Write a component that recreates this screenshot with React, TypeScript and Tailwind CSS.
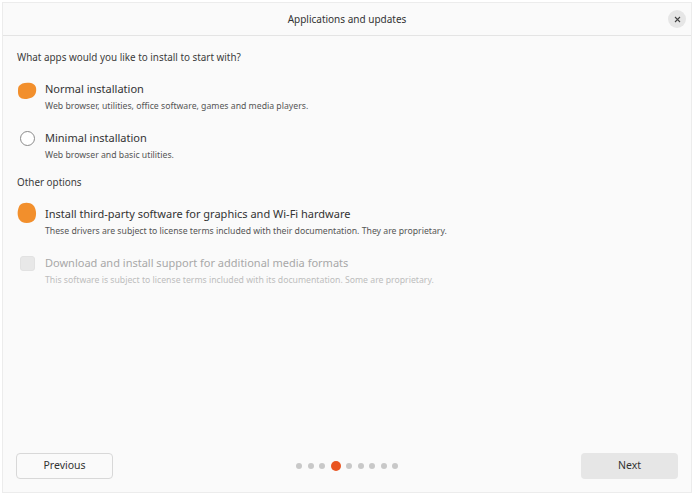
import React from "react";

function Blob({ tall }: { tall?: boolean }) {
  return tall ? (
    <svg width="20" height="22" viewBox="0 0 20 22" className="shrink-0">
      <path d="M3 3 C6 0 13 0 16 3 C19 6 20 12 18 17 C16 21 9 22 5 20 C1 18 0 12 1 8 C1.5 6 2 4 3 3 Z" fill="#f28f2c" />
    </svg>
  ) : (
    <svg width="20" height="18" viewBox="0 0 20 18" className="shrink-0">
      <path d="M2 4 C4 1 9 0 14 1 C18 2 20 5 19 10 C18 15 13 17 8 17 C3 17 1 14 1 10 C1 7 1 5 2 4 Z" fill="#f28f2c" />
    </svg>
  );
}

export default function App() {
  const font = { fontFamily: '"Noto Sans", "Open Sans", sans-serif' };
  return (
    <div className="w-[696px] h-[498px] bg-white p-[2px] pb-[5px] pr-[4px]" style={font}>
      <div className="w-full h-full bg-[#fafafa] border border-[#ececec] flex flex-col">
        <div className="h-[33px] border-b border-[#e4e4e4] relative flex items-center justify-center shrink-0">
          <span className="text-[10px] text-[#333]">Applications and updates</span>
          <div className="absolute right-[5px] top-[7px] w-[18px] h-[18px] rounded-full bg-[#e6e6e6] flex items-center justify-center">
            <svg width="7" height="7" viewBox="0 0 7 7">
              <path d="M1 1 L6 6 M6 1 L1 6" stroke="#444" strokeWidth="1.1" />
            </svg>
          </div>
        </div>
        <div className="flex-1 flex flex-col px-[14px] pt-[14px]">
          <div className="text-[9.9px] text-[#3a3a3a] leading-[14px]">What apps would you like to install to start with?</div>

          <div className="flex mt-[17px] items-start">
            <div className="w-[28px] pt-[1px]"><Blob /></div>
            <div className="flex flex-col">
              <div className="text-[11px] text-[#333] leading-[16px]">Normal installation</div>
              <div className="text-[8.7px] text-[#555] leading-[12px] mt-[3px]">Web browser, utilities, office software, games and media players.</div>
            </div>
          </div>

          <div className="flex mt-[18px] items-start">
            <div className="w-[28px] pt-[1px] pl-[3px]">
              <div className="w-[15px] h-[15px] rounded-full border border-[#8a8a8a] bg-white" />
            </div>
            <div className="flex flex-col">
              <div className="text-[11px] text-[#333] leading-[16px]">Minimal installation</div>
              <div className="text-[8.7px] text-[#555] leading-[12px] mt-[3px]">Web browser and basic utilities.</div>
            </div>
          </div>

          <div className="text-[9.9px] text-[#3a3a3a] leading-[14px] mt-[14px]">Other options</div>

          <div className="flex mt-[17px] items-start">
            <div className="w-[28px] -mt-[4px]"><Blob tall /></div>
            <div className="flex flex-col">
              <div className="text-[11px] text-[#333] leading-[16px]">Install third-party software for graphics and Wi-Fi hardware</div>
              <div className="text-[8.7px] text-[#555] leading-[12px] mt-[3px]">These drivers are subject to license terms included with their documentation. They are proprietary.</div>
            </div>
          </div>

          <div className="flex mt-[18px] items-start">
            <div className="w-[28px] pt-[1px] pl-[3px]">
              <div className="w-[15px] h-[15px] rounded-[3px] bg-[#e8e8e8] border border-[#e2e2e2]" />
            </div>
            <div className="flex flex-col">
              <div className="text-[11px] text-[#a8a8a8] leading-[16px]">Download and install support for additional media formats</div>
              <div className="text-[8.7px] text-[#bdbdbd] leading-[12px] mt-[3px]">This software is subject to license terms included with its documentation. Some are proprietary.</div>
            </div>
          </div>
        </div>
        <div className="flex items-center justify-between px-[13px] pb-[13px] shrink-0">
          <button className="w-[97px] h-[26px] rounded-[4px] border border-[#d8d8d8] bg-[#fafafa] text-[10.5px] text-[#333]">Previous</button>
          <div className="flex items-center gap-[5.5px] ml-[0px]">
            {[0, 1, 2, 3, 4, 5, 6, 7, 8].map((i) =>
              i === 3 ? (
                <div key={i} className="w-[10px] h-[10px] rounded-full bg-[#e95420]" />
              ) : (
                <div key={i} className="w-[6px] h-[6px] rounded-full bg-[#c8c8c8]" />
              )
            )}
          </div>
          <button className="w-[97px] h-[26px] rounded-[4px] bg-[#e6e6e6] text-[10.5px] text-[#333]">Next</button>
        </div>
      </div>
    </div>
  );
}
